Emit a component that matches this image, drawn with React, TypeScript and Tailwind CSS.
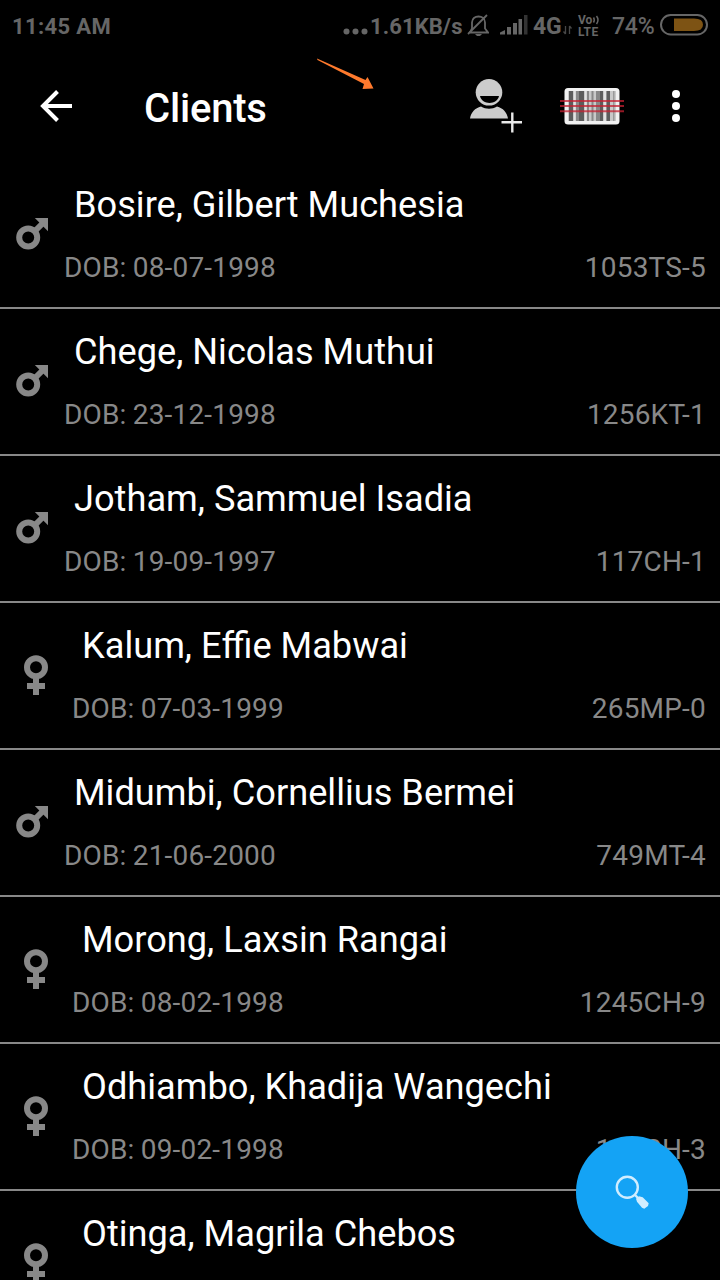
type Client = {
    name: string;
    dob: string;
    code: string;
    gender: "male" | "female";
};

const clients: Client[] = [
    { name: "Bosire, Gilbert Muchesia", dob: "08-07-1998", code: "1053TS-5", gender: "male" },
    { name: "Chege, Nicolas Muthui", dob: "23-12-1998", code: "1256KT-1", gender: "male" },
    { name: "Jotham, Sammuel Isadia", dob: "19-09-1997", code: "117CH-1", gender: "male" },
    { name: "Kalum, Effie Mabwai", dob: "07-03-1999", code: "265MP-0", gender: "female" },
    { name: "Midumbi, Cornellius Bermei", dob: "21-06-2000", code: "749MT-4", gender: "male" },
    { name: "Morong, Laxsin Rangai", dob: "08-02-1998", code: "1245CH-9", gender: "female" },
    { name: "Odhiambo, Khadija Wangechi", dob: "09-02-1998", code: "126CH-3", gender: "female" },
    { name: "Otinga, Magrila Chebos", dob: "", code: "", gender: "female" },
];

function MaleIcon() {
    return (
        <svg className="mt-14 mr-4 ml-4 h-8 w-8 shrink-0" viewBox="0 0 32 32">
            <circle cx="12.2" cy="19.6" r="9" fill="none" stroke="#888" strokeWidth="6" />
            <path d="M18.5 13.5 26 6" stroke="#888" strokeWidth="6" />
            <path d="M18.8 0H32v13.2z" fill="#888" />
        </svg>
    );
}

function FemaleIcon() {
    return (
        <svg className="mt-[52px] mr-6 ml-6 h-10 w-6 shrink-0" viewBox="0 0 24 40">
            <circle cx="12" cy="12.3" r="9" fill="none" stroke="#888" strokeWidth="6" />
            <path d="M9 23h6v5h6v6h-6v6H9v-6H3v-6h6z" fill="#888" />
        </svg>
    );
}

function ClientRow({ client }: { client: Client }) {
    return (
        <li className="flex h-[147px] shrink-0 items-start border-b-2 border-[#888]">
            {client.gender === "male" ? <MaleIcon /> : <FemaleIcon />}
            <div className="flex-1 pt-[22px] pr-3.5">
                <p className="pl-[10px] text-[36.2px] leading-[42px] whitespace-nowrap text-white">{client.name}</p>
                {client.dob && (
                    <div className="mt-[26px] flex justify-between text-[28px] leading-8 text-[#888]">
                        <span className="tracking-[0.18px] [word-spacing:-1px]">DOB: {client.dob}</span>
                        <span className="tracking-[0.2px]">{client.code}</span>
                    </div>
                )}
            </div>
        </li>
    );
}

function StatusBar() {
    return (
        <div className="flex h-[52px] items-center pr-3 pl-3 text-[22px] font-bold text-[#666]">
            <span className="tracking-[0.35px] whitespace-nowrap">11:45 AM</span>
            <div className="ml-auto flex h-[50px] items-center">
                <svg className="mr-[3px] h-[50px] w-[26px]" viewBox="0 0 26 50" fill="#666">
                    <circle cx="3.5" cy="30.5" r="3" />
                    <circle cx="12.5" cy="30.5" r="3" />
                    <circle cx="21.5" cy="30.5" r="3" />
                </svg>
                <span className="-ml-[2px] w-[96px] tracking-[0.1px] whitespace-nowrap">1.61KB/s</span>
                {/* muted bell */}
                <svg className="ml-[1px] mr-px h-[50px] w-[22px]" viewBox="0 0 22 50" fill="none" stroke="#666" strokeWidth="1.8">
                    <path d="M3 31.5h18l-3-4v-6c0-4-3-6-6.500-6s-6.500 2-6.500 6v6l-2 4" />
                    <path d="M1 33 20 14" />
                    <path d="M8 33h7l-2 2h-3z" fill="#666" stroke="none" />
                </svg>
                {/* signal strength */}
                <svg className="ml-[10px] h-[50px] w-7" viewBox="0 0 28 50" fill="#666">
                    <path d="M0 33.500v-2l5-2.500v4.500zM7 26h4v7.500H7zM13 22h4v11.500h-4zM18.500 18H22v15.500h-3.500z" />
                    <path d="M24 14h3.500v19.500H24z" fill="#333" />
                </svg>
                <span className="ml-[5px] w-[28px] pt-[2px] text-[23px] tracking-[-0.3px]">4G</span>
                <svg className="ml-[2px] h-[50px] w-[9px]" viewBox="0 0 9 50" fill="none" stroke="#484848" strokeWidth="1.3">
                    <path d="M2.500 25v8M0.500 30.500l2 2.500M6.500 33v-8M8.500 27.500l-2-2.500" />
                </svg>
                {/* VoLTE badge */}
                <div className="ml-[6px] flex w-6 flex-col text-[12px] leading-[12px] font-bold">
                    <div className="flex h-3 items-center">
                        <span className="block h-3">Vo</span>
                        <svg className="h-3 w-2" viewBox="0 0 8 12" fill="none" stroke="#666" strokeWidth="1.5">
                            <path d="M1.500 3.500q1.500 2.500 0 5M4.500 2q3 4 0 8" />
                        </svg>
                    </div>
                    <span className="block h-3 tracking-[0.4px]">LTE</span>
                </div>
                <span className="ml-[10px] w-[42px] pt-[2px] text-[23px] font-medium tracking-[-0.2px] whitespace-nowrap">74%</span>
                <svg className="ml-[6px] h-[50px] w-[48px]" viewBox="0 0 48 50">
                    <rect x="1" y="14" width="46" height="19.5" rx="9.7" fill="none" stroke="#666" strokeWidth="2" />
                    <path d="M14 17.500h20q9 0 9 6.200t-9 6.300H14z" fill="#7d5314" />
                </svg>
            </div>
        </div>
    );
}

function AddClientIcon() {
    return (
        <svg className="h-[56px] w-[54px]" viewBox="0 0 54 56">
            <circle cx="19" cy="14.3" r="13.3" fill="#ccc" />
            <path d="M10 18h19c-2 9.300-17 9.300-19 0z" fill="#000" />
            <path d="M0 40.500c1-6 5-10.500 11-12 5 3 11 3 16 0 6 1.500 10 6 11 12z" fill="#ccc" />
            <path d="M31.500 44.300h20.500M42.300 34.500v20" stroke="#e8e8e8" strokeWidth="2.4" fill="none" />
        </svg>
    );
}

function BarcodeIcon() {
    return (
        <svg className="h-[40px] w-[64px]" viewBox="0 0 64 40">
            <rect x="4.5" y="2" width="55" height="36.5" rx="3.5" fill="#f1f1f1" />
            <path d="M8 5h48v30H8z" fill="#c9c9c9" />
            <path d="M9 5h4v30H9zM19 5h5v30h-5zM40 5h3v30h-3zM46.500 5h3.500v30h-3.500z" fill="#5c5c5c" />
            <path d="M16 5h3v30h-3zM27 5h2v30h-2zM31.500 5h2v30h-2zM36 5h4v30h-4z" fill="#888" />
            <path d="M25 5h1.500v30H25zM44 5h2v30h-2zM14 5h1.500v30H14z" fill="#e2e2e2" />
            <path d="M53 5h1.500v30H53z" fill="#999" />
            <path d="M0 15h64M0 20h64M0 25.200h64" stroke="#c42032" strokeOpacity=".75" strokeWidth="2" />
        </svg>
    );
}

function AppBar() {
    return (
        <header className="flex h-[110px] items-center pb-[2px]">
            <svg className="ml-10 h-8 w-8" viewBox="0 0 32 32" fill="none" stroke="#fff" strokeWidth="4">
                <path d="M32 16H4M17.500 1.500 3 16l14.500 14.500" />
            </svg>
            <h1 className="mt-1.5 ml-[72px] text-[40px] leading-[48px] font-medium tracking-[-0.2px] text-white">Clients</h1>
            <div className="ml-auto flex items-center">
                <AddClientIcon />
                <div className="ml-9">
                    <BarcodeIcon />
                </div>
                <svg className="mr-[39px] ml-[47px] h-8 w-[10px]" viewBox="0 0 10 32" fill="#fff">
                    <circle cx="5" cy="4" r="4" />
                    <circle cx="5" cy="16" r="4" />
                    <circle cx="5" cy="28" r="4" />
                </svg>
            </div>
        </header>
    );
}

export default function App() {
    return (
        <main className="relative flex h-[1280px] w-[720px] flex-col overflow-hidden bg-black font-[Roboto,sans-serif]">
            <StatusBar />
            <AppBar />

            <ul className="flex flex-1 flex-col overflow-hidden">
                {clients.map((client) => (
                    <ClientRow key={client.name} client={client} />
                ))}
            </ul>

            {/* Pointer arrow */}
            <svg className="absolute top-[58px] left-[316px] h-8 w-[58px]" viewBox="0 0 58 32" fill="#ff7a2d">
                <path d="M1 0.500 1.500 2 48 26 46.500 31 57.500 30.500 51.500 19 49.500 22z" />
            </svg>

            {/* Search button */}
            <button className="absolute top-[1136px] left-[576px] flex h-28 w-28 items-center justify-center rounded-full bg-[#14a3f5]">
                <svg className="h-9 w-9" viewBox="0 0 36 36" fill="none">
                    <circle cx="13.3" cy="13.3" r="10.5" stroke="#d0edff" strokeWidth="2.4" />
                    <path d="m20.500 20.500 4 4" stroke="#d0edff" strokeWidth="2.4" />
                    <path d="M22 24.700 25 22.300l3.700 1 6 6-.7 2.700-3.700 2.700-2.300-1-5-6z" fill="#d0edff" />
                </svg>
            </button>
        </main>
    );
}
